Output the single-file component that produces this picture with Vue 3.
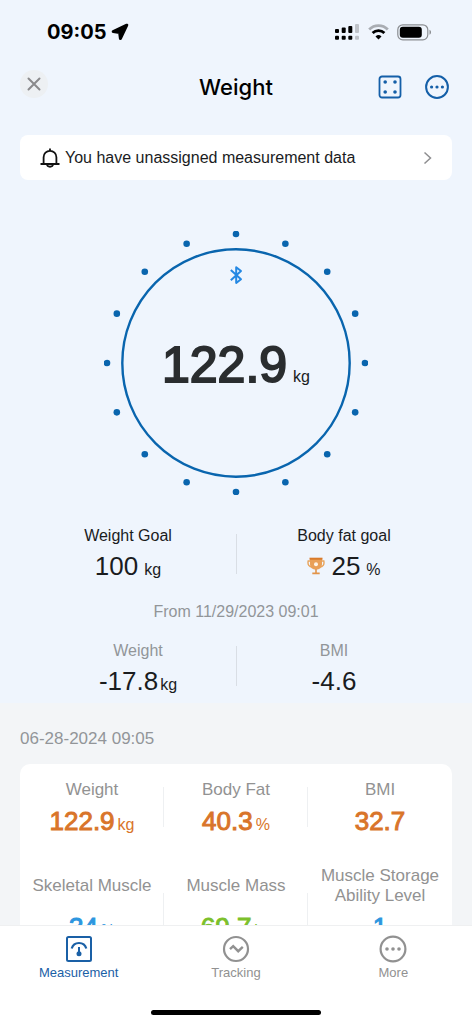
<script setup>
const dots = Array.from({ length: 16 }, (_, i) => {
  const angle = (i * Math.PI) / 8
  return { x: 132 + 129 * Math.sin(angle), y: 132 - 129 * Math.cos(angle) }
})

const metrics = [
  { label: 'Weight', value: '122.9', unit: 'kg', tone: 'orange' },
  { label: 'Body Fat', value: '40.3', unit: '%', tone: 'orange' },
  { label: 'BMI', value: '32.7', unit: '', tone: 'orange' },
  { label: 'Skeletal Muscle', value: '34', unit: '%', tone: 'blue' },
  { label: 'Muscle Mass', value: '69.7', unit: 'kg', tone: 'green' },
  { label: 'Muscle Storage Ability Level', value: '1', unit: '', tone: 'blue' },
]
</script>

<template>
  <div class="screen">
    <main class="content">
      <div class="hero">
        <div class="status">
          <div class="clock">
            <span>09:05</span>
            <svg width="18" height="18" viewBox="0 0 18 18"><path d="M15.800 2.200 2.200 8.600 8.600 9.400 9.400 15.600Z" stroke="#000" stroke-width="3" stroke-linejoin="round" /></svg>
          </div>
          <div class="signals">
            <svg width="25" height="18" viewBox="0 0 25 18">
              <g fill="#000"><rect x="0" y="6" width="4" height="4" rx="1" /><rect x="6.700" y="4.500" width="4" height="5.500" rx="1" /><rect x="13.300" y="3" width="4" height="7" rx="1" /><rect x="0" y="12.800" width="4" height="4" rx="1" /><rect x="6.700" y="12.800" width="4" height="4" rx="1" /><rect x="13.300" y="12.800" width="4" height="4" rx="1" /></g>
              <g fill="#bfc3c9"><rect x="20" y="1" width="4" height="9" rx="1" /><rect x="20" y="12.800" width="4" height="4" rx="1" /></g>
            </svg>
            <svg width="21" height="16" viewBox="0 0 21 16" fill="none">
              <path d="M1.200 5.400a13.200 13.200 0 0 1 18.600 0" stroke="#a9adb3" stroke-width="2.800" />
              <path d="M4.600 9a8.400 8.400 0 0 1 11.800 0" stroke="#000" stroke-width="2.800" />
              <path d="M10.500 15.600 7.500 12.400a4.300 4.300 0 0 1 6 0Z" fill="#000" />
            </svg>
            <svg width="35" height="17" viewBox="0 0 35 17">
              <rect x=".8" y=".8" width="30" height="15" rx="5" fill="none" stroke="#8b8e92" stroke-width="1.200" />
              <rect x="2.800" y="2.800" width="22" height="11" rx="3" />
              <path d="M32.500 5.800c2 .8 2 4.200 0 5Z" fill="#8b8e92" />
            </svg>
          </div>
        </div>

        <header class="header">
          <button class="close" aria-label="Close">
            <svg width="14" height="14" viewBox="0 0 14 14"><path d="m1.500 1.500 11 11m0-11-11 11" fill="none" stroke="#8a8a8c" stroke-width="2" stroke-linecap="round" /></svg>
          </button>
          <h1>Weight</h1>
          <div class="actions">
            <button aria-label="Scale">
              <svg width="24" height="24" viewBox="0 0 24 24"><rect x="1.500" y="1.500" width="21" height="21" rx="2.500" fill="none" stroke="#145fa8" stroke-width="1.800" /><g fill="#145fa8"><circle cx="7.200" cy="7" r="1.800" /><circle cx="17" cy="7" r="1.800" /><circle cx="7.200" cy="17" r="1.800" /><circle cx="17" cy="17" r="1.800" /></g></svg>
            </button>
            <button aria-label="Options">
              <svg width="24" height="24" viewBox="0 0 24 24"><circle cx="12" cy="12" r="10.900" fill="none" stroke="#145fa8" stroke-width="2" /><g fill="#145fa8"><circle cx="6.600" cy="12" r="1.600" /><circle cx="12" cy="12" r="1.600" /><circle cx="17.400" cy="12" r="1.600" /></g></svg>
            </button>
          </div>
        </header>

        <button class="notice">
          <svg width="20" height="20" viewBox="0 0 20 20" fill="none" stroke="#111" stroke-width="1.800"><path d="M.5 16h19M3.600 16V9.200a6.400 6.400 0 0 1 12.800 0V16M10 .5v2.300M7 16.500c.3 3 5.700 3 6 0" /></svg>
          <span>You have unassigned measurement data</span>
          <svg class="chevron" width="9" height="14" viewBox="0 0 9 14"><path d="m1.500 1.500 6 5.500-6 5.500" fill="none" stroke="#8e8e90" stroke-width="1.500" /></svg>
        </button>

        <section class="gauge">
          <svg class="ring" viewBox="0 0 264 264">
            <circle cx="132" cy="132" r="113.700" fill="none" stroke="#0965ae" stroke-width="2.400" />
            <circle v-for="(dot, i) in dots" :key="i" :cx="dot.x" :cy="dot.y" r="3.300" fill="#0965ae" />
            <path d="m126.800 39 10.200 9.200-4.800 3.800V36.200l4.800 3.800-10.200 9.200" fill="none" stroke="#2488e3" stroke-width="2" stroke-linejoin="round" />
          </svg>
          <p class="reading"><strong>122.9</strong><span>kg</span></p>
        </section>

        <section class="pair goals">
          <div class="stat">
            <span class="label">Weight Goal</span>
            <span class="value spaced">100<small>kg</small></span>
          </div>
          <div class="stat">
            <span class="label">Body fat goal</span>
            <span class="value spaced">
              <svg class="trophy" width="18" height="18" viewBox="0 0 18 18">
                <path d="M3.600 4H1.200c-.8 3.600 1 6 4 6M14.400 4h2.400c.8 3.600-1 6-4 6" fill="none" stroke="#e8a45c" stroke-width="1.400" />
                <path d="M3 1.500h12V7c0 3.600-2.500 5.600-6 5.600S3 10.600 3 7Z" fill="#e9a057" />
                <path d="M2.500.7h13v2h-13Z" fill="#d97a2a" />
                <path d="M8.200 12h1.600v3.800H8.200ZM5.300 15.500h7.400v1.700H5.300Z" fill="#e29449" />
                <circle cx="9" cy="7.200" r="2" fill="#fff4e5" />
              </svg>25<small>%</small></span>
          </div>
        </section>

        <p class="since">From 11/29/2023 09:01</p>

        <section class="pair changes">
          <div class="stat">
            <span class="label">Weight</span>
            <span class="value">-17.8<small>kg</small></span>
          </div>
          <div class="stat">
            <span class="label">BMI</span>
            <span class="value">-4.6</span>
          </div>
        </section>
      </div>

      <section class="history">
        <h2>06-28-2024 09:05</h2>
        <div class="card">
          <div v-for="m in metrics" :key="m.label" class="metric">
            <span class="name">{{ m.label }}</span>
            <span class="amount" :class="m.tone"><b>{{ m.value }}</b><small v-if="m.unit">{{ m.unit }}</small></span>
          </div>
        </div>
      </section>
    </main>

    <footer class="bottom">
      <nav>
        <a href="#measurement" class="active">
          <svg width="28" height="28" viewBox="0 0 28 28" fill="none" stroke="currentColor"><rect x="2" y="2" width="24" height="24" rx="1.500" stroke-width="2" /><path d="M6.700 13.500a7.600 7.600 0 0 1 14.600 0" stroke-width="2.200" /><path d="M14 12v6" stroke-width="2" /><circle cx="14" cy="18.800" r="2.500" fill="currentColor" stroke="none" /></svg>
          <span>Measurement</span>
        </a>
        <a href="#tracking">
          <svg width="28" height="28" viewBox="0 0 28 28" fill="none" stroke="currentColor"><circle cx="14" cy="14" r="12" stroke-width="2.200" /><path d="m8 14.200 3.200-3 5 5 4.600-4.400" stroke-width="2.400" /></svg>
          <span>Tracking</span>
        </a>
        <a href="#more">
          <svg width="28" height="28" viewBox="0 0 28 28" fill="none" stroke="currentColor"><circle cx="14" cy="14" r="12.400" stroke-width="2.200" /><g fill="currentColor" stroke="none"><circle cx="8" cy="14" r="1.800" /><circle cx="14" cy="14" r="1.800" /><circle cx="20" cy="14" r="1.800" /></g></svg>
          <span>More</span>
        </a>
      </nav>
      <div class="home"></div>
    </footer>
  </div>
</template>

<style>
body { margin: 0; }
</style>

<style scoped>
* { box-sizing: border-box; }
h1, h2, p { margin: 0; font-weight: 400; }
button { border: 0; padding: 0; background: none; font: inherit; color: inherit; cursor: pointer; }
svg { display: block; flex: none; }
.screen {
  height: 100vh;
  display: flex;
  flex-direction: column;
  background: #f3f5f7;
  font-family: "Liberation Sans", Arial, sans-serif;
  font-size: 16px;
  line-height: 20px;
  color: #1a1c1e;
}
.content { flex: 1; min-height: 0; overflow: hidden; }
.hero { background: #eff5fd; padding: 0 20px 8px; }
.status {
  display: flex;
  justify-content: space-between;
  align-items: center;
  height: 64px;
  padding: 0 20px 0 27px;
}
.clock { display: flex; align-items: center; gap: 5px; font: 700 20px/24px Inter, sans-serif; color: #000; }
.signals { display: flex; align-items: center; gap: 8px; }
.header { display: grid; grid-template-columns: 1fr auto 1fr; align-items: center; height: 46px; }
.header h1 { font: 500 22px/28px Inter, sans-serif; color: #000; }
.close { display: grid; place-items: center; width: 28px; height: 28px; margin-bottom: 6px; border-radius: 50%; background: #edf0f3; }
.actions { display: flex; justify-content: flex-end; gap: 23px; padding-right: 3px; }
.notice {
  display: flex;
  align-items: center;
  gap: 5px;
  width: 100%;
  height: 45px;
  margin-top: 25px;
  padding: 0 20px;
  border-radius: 8px;
  background: #fff;
  text-align: left;
}
.chevron { margin-left: auto; }
.gauge { display: grid; place-items: center; margin-top: 51px; }
.ring { grid-area: 1 / 1; width: 264px; }
.reading { grid-area: 1 / 1; display: flex; align-items: baseline; gap: 6px; padding-top: 16px; line-height: 56px; }
.reading strong { font-size: 50px; font-weight: 400; color: #2a2d2f; -webkit-text-stroke: 2px #2a2d2f; }
.pair { display: grid; grid-template-columns: 1fr 1fr; position: relative; }
.pair::after { content: ""; position: absolute; left: 50%; top: 8px; width: 1px; height: 40px; background: #d9dee5; }
.changes::after { top: 5px; }
.stat { display: flex; flex-direction: column; align-items: center; gap: 6px; }
.goals { margin-top: 31px; }
.value { display: flex; align-items: baseline; gap: 2px; font-size: 26px; line-height: 28px; }
.spaced { gap: 6px; }
.value small, .amount small { font-size: 16px; line-height: 20px; }
.trophy { align-self: center; }
.since { margin-top: 22px; text-align: center; color: #929599; }
.changes { margin-top: 19px; padding: 0 20px; }
.changes .label { color: #929599; }
.history { padding: 26px 20px 0; }
.history h2 { font-size: 17px; line-height: 20px; color: #929599; }
.card {
  display: grid;
  grid-template-columns: repeat(3, 1fr);
  row-gap: 31px;
  margin-top: 15px;
  padding: 16px 0;
  border-radius: 10px;
  background: #fff;
}
.metric { position: relative; display: flex; flex-direction: column; align-items: center; gap: 7px; text-align: center; }
.metric:not(:nth-child(3n))::after { content: ""; position: absolute; right: 0; bottom: 8px; width: 1px; height: 40px; background: #eef0f2; }
.name { flex: 1; display: flex; align-items: center; padding: 0 12px; font-size: 17px; color: #929292; }
.amount { display: flex; align-items: baseline; gap: 3px; font-size: 26px; line-height: 28px; }
.amount b { font-weight: 400; -webkit-text-stroke: 1px currentColor; }
.orange { color: #d9752a; }
.blue { color: #2d96df; }
.green { color: #7cc02b; }
.bottom { padding: 9px 0; border-top: 1px solid #eff0f1; background: #fff; }
.bottom nav { display: grid; grid-template-columns: repeat(3, 1fr); }
.bottom a { display: flex; flex-direction: column; align-items: center; font-size: 13px; color: #919191; text-decoration: none; }
.bottom .active { color: #1a60a6; }
.home { width: 36%; height: 5px; margin: 27px auto 0; border-radius: 3px; background: #000; }
</style>
